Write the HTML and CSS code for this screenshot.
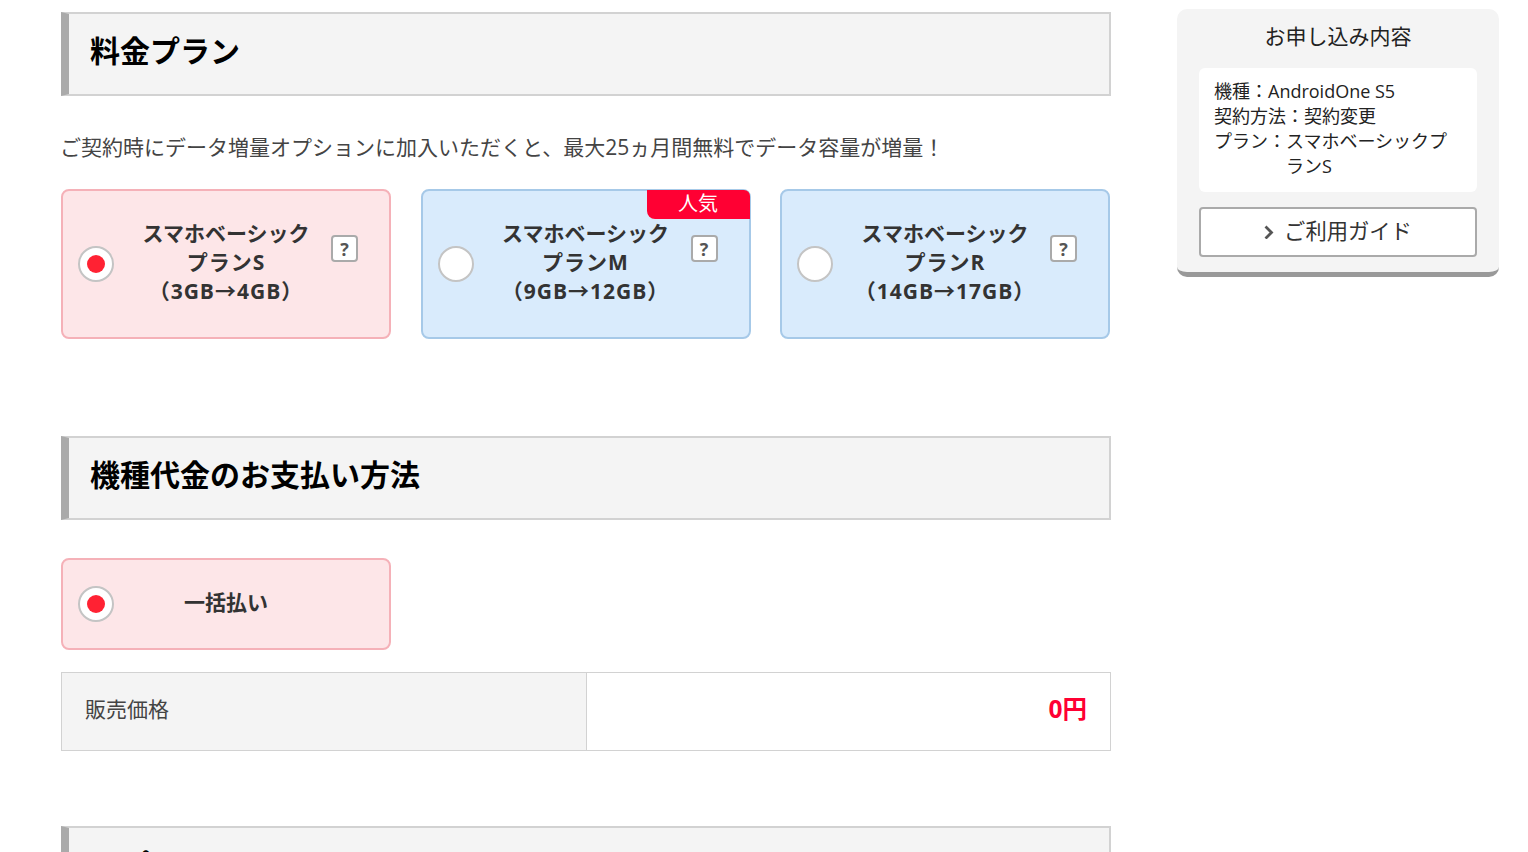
FILE: index.html
```html
<!DOCTYPE html>
<html lang="ja">
<head>
  <meta charset="UTF-8">
  <title>お申し込み内容</title>
  <link rel="stylesheet" href="styles.css">
</head>
<body>
  <div class="page">
    <main class="main">
      <h2 class="section-title">料金プラン</h2>
      <p class="lead">ご契約時にデータ増量オプションに加入いただくと、最大25ヵ月間無料でデータ容量が増量！</p>

      <div class="plans">
        <div class="plan-card selected">
          <span class="radio"></span>
          <div class="plan-name">スマホベーシック<br><span class="plan-sub">プランS<br>（3GB→4GB）</span></div>
          <span class="help">?</span>
        </div>
        <div class="plan-card">
          <span class="badge">人気</span>
          <span class="radio"></span>
          <div class="plan-name">スマホベーシック<br><span class="plan-sub">プランM<br>（9GB→12GB）</span></div>
          <span class="help">?</span>
        </div>
        <div class="plan-card">
          <span class="radio"></span>
          <div class="plan-name">スマホベーシック<br><span class="plan-sub">プランR<br>（14GB→17GB）</span></div>
          <span class="help">?</span>
        </div>
      </div>

      <h2 class="section-title second">機種代金のお支払い方法</h2>

      <div class="plans">
        <div class="plan-card selected short">
          <span class="radio"></span>
          <div class="plan-name">一括払い</div>
        </div>
      </div>

      <div class="price-row">
        <div class="price-label">販売価格</div>
        <div class="price-value">0円</div>
      </div>

      <h2 class="section-title third">オプション</h2>
    </main>

    <aside class="side">
      <h3 class="side-title">お申し込み内容</h3>
      <dl class="summary">
        <div class="summary-row"><dt>機種：</dt><dd>AndroidOne S5</dd></div>
        <div class="summary-row"><dt>契約方法：</dt><dd>契約変更</dd></div>
        <div class="summary-row"><dt>プラン：</dt><dd>スマホベーシックプランS</dd></div>
      </dl>
      <a class="guide-btn" href="#">
        <svg class="chevron" width="10" height="14" viewBox="0 0 10 14"><path d="M1.5 1.5 7.5 7.5 1.5 13.5" fill="none" stroke="#555" stroke-width="2.8"/></svg>
        <span>ご利用ガイド</span>
      </a>
    </aside>
  </div>
</body>
</html>
```

FILE: styles.css
```css
html, body {
  height: 852px;
  overflow: hidden;
}

body {
  margin: 0;
  padding: 0;
  font-family: "Open Sans", "Noto Sans CJK JP", sans-serif;
  color: #333;
  background: #fff;
}

.page {
  display: flex;
  align-items: flex-start;
  padding-left: 61px;
}

.main {
  width: 1050px;
  margin-top: 12px;
}

.section-title {
  box-sizing: border-box;
  height: 84px;
  margin: 0;
  padding: 0 0 10px 21px;
  display: flex;
  align-items: center;
  font-size: 30px;
  font-weight: 700;
  color: #000;
  background: #f4f4f4;
  border: 2px solid #d2d2d2;
  border-left: 8px solid #aaa;
}

.section-title.second {
  margin-top: 97px;
}

.section-title.third {
  margin-top: 75px;
}

.lead {
  margin: 36px 0 27px -1px;
  font-size: 21px;
  line-height: 30px;
  color: #444;
  white-space: nowrap;
}

.plans {
  display: flex;
  gap: 29.5px;
}

.section-title.second + .plans {
  margin-top: 38px;
}

.plan-card {
  box-sizing: border-box;
  position: relative;
  width: 330px;
  height: 150px;
  display: flex;
  align-items: center;
  justify-content: center;
  background: #d9ebfc;
  border: 2px solid #a6c9e8;
  border-radius: 8px;
}

.plan-card.selected {
  background: #fde6e8;
  border-color: #f5b1b8;
}

.plan-card.short {
  height: 92px;
}

.plan-name {
  margin-top: -4px;
  font-size: 21px;
  font-weight: 700;
  line-height: 29px;
  text-align: center;
}

.plan-sub {
  letter-spacing: 1px;
}

.radio {
  box-sizing: border-box;
  position: absolute;
  left: 15px;
  top: 55px;
  width: 36px;
  height: 36px;
  background: #fff;
  border: 2px solid #c4c4c4;
  border-radius: 50%;
}

.short .radio {
  top: 26px;
}

.selected .radio::after {
  content: "";
  position: absolute;
  left: 7px;
  top: 7px;
  width: 18px;
  height: 18px;
  background: #ff2233;
  border-radius: 50%;
}

.help {
  box-sizing: border-box;
  position: absolute;
  left: 268px;
  top: 44px;
  width: 27px;
  height: 27px;
  display: flex;
  align-items: center;
  justify-content: center;
  font-size: 18px;
  font-weight: 700;
  color: #555;
  background: #fff;
  border: 2px solid #aaa;
  border-radius: 4px;
}

.badge {
  position: absolute;
  top: -1px;
  right: -1px;
  width: 103px;
  height: 29px;
  font-size: 20px;
  line-height: 27px;
  text-align: center;
  color: #fff;
  background: #ff0033;
  border-radius: 0 6px 0 8px;
}

.price-row {
  box-sizing: border-box;
  display: flex;
  height: 79px;
  margin-top: 22px;
  border: 1px solid #d2d2d2;
}

.price-label {
  box-sizing: border-box;
  width: 525px;
  padding-left: 23px;
  font-size: 21px;
  line-height: 73px;
  color: #444;
  background: #f4f4f4;
  border-right: 1px solid #d2d2d2;
}

.price-value {
  flex: 1;
  padding-right: 23px;
  font-size: 24.5px;
  font-weight: 700;
  line-height: 71px;
  text-align: right;
  color: #ff0033;
}

.side {
  box-sizing: border-box;
  width: 322px;
  height: 268px;
  margin: 9px 0 0 66px;
  padding: 0 22px;
  color: #222;
  background: #f4f4f4;
  border-bottom: 5px solid #999;
  border-radius: 10px;
}

.side-title {
  margin: 12px 0 17px;
  font-size: 21px;
  font-weight: 400;
  line-height: 30px;
  text-align: center;
}

.summary {
  box-sizing: border-box;
  height: 124px;
  margin: 0 0 15px;
  padding: 11px 15px;
  font-size: 18px;
  line-height: 25px;
  background: #fff;
  border-radius: 6px;
}

.summary-row {
  display: flex;
}

.summary dt, .summary dd {
  margin: 0;
}

.summary dt {
  flex: none;
}

.guide-btn {
  box-sizing: border-box;
  height: 50px;
  padding-bottom: 5px;
  display: flex;
  align-items: center;
  justify-content: center;
  gap: 10px;
  font-size: 21.3px;
  color: #333;
  text-decoration: none;
  background: #fff;
  border: 2px solid #aaa;
  border-radius: 4px;
}

.chevron {
  margin-top: 5px;
}
```
